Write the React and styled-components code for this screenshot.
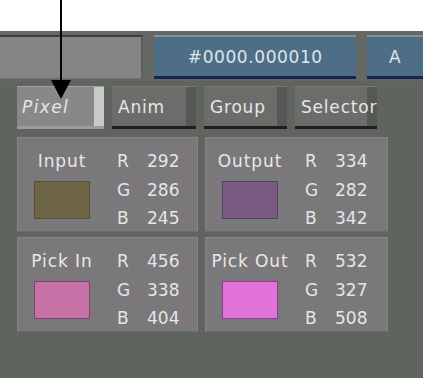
import styled, { createGlobalStyle } from 'styled-components'

const GlobalStyle = createGlobalStyle`
  html, body {
    margin: 0;
    padding: 0;
    background: #ffffff;
  }
  body {
    font-family: "DejaVu Sans", "Liberation Sans", sans-serif;
  }
`

const Page = styled.div`
  position: relative;
  width: 423px;
  height: 378px;
  overflow: hidden;
  background: #ffffff;
`

const WhiteHead = styled.div`
  height: 31px;
`

const TopBar = styled.div`
  display: flex;
  align-items: flex-start;
  gap: 11px;
  height: 50px;
  padding-top: 4px;
  box-sizing: border-box;
  background: #656762;
`

const Field = styled.div`
  width: 144px;
  height: 44px;
  box-sizing: border-box;
  background: #858585;
  border-top: 2px solid #3d3e3c;
  border-right: 2px solid #5d5e5b;
  border-bottom: 1px solid #707170;
`

const BlueButton = styled.div`
  width: ${({ w }) => w}px;
  height: 44px;
  box-sizing: border-box;
  display: flex;
  align-items: center;
  justify-content: center;
  background: #4d6e86;
  border-top: 2px solid #7d93a4;
  border-bottom: 3px solid #1a2357;
  color: #dfe5ea;
  font-size: 17px;
  letter-spacing: 0.6px;
`

const Main = styled.div`
  background: #60645f;
  height: 297px;
  padding: 5px 0 0 17px;
  box-sizing: border-box;
`

const TabRow = styled.div`
  display: flex;
  gap: 8px;
  margin-bottom: 8px;
`

const Tab = styled.div`
  width: ${({ w }) => w}px;
  height: 43px;
  box-sizing: border-box;
  display: flex;
  align-items: center;
  padding-left: ${({ active }) => (active ? 5 : 6)}px;
  background: ${({ active }) => (active ? '#888888' : '#6c6d6a')};
  border-top: 1px solid ${({ active }) => (active ? '#a0a0a0' : '#7a7b78')};
  border-bottom: 3px solid ${({ active }) => (active ? '#9c9c9c' : '#1f201e')};
  box-shadow: inset -10px 0 0 ${({ active }) => (active ? '#c9c9c9' : '#565855')};
  color: #e6e6e6;
  font-size: 17px;
  letter-spacing: ${({ active }) => (active ? 1.4 : 0.8)}px;
  white-space: nowrap;
  font-style: ${({ active }) => (active ? 'italic' : 'normal')};
`

const Grid = styled.div`
  display: grid;
  grid-template-columns: 181px 183px;
  grid-auto-rows: 95px;
  column-gap: 7px;
  row-gap: 5px;
`

const Panel = styled.div`
  display: flex;
  padding: 9px 0 0 7px;
  box-sizing: border-box;
  background: #7a787a;
  border: 1px solid #868486;
  border-bottom-color: #6c6b6c;
`

const SwatchCol = styled.div`
  width: 74px;
  display: flex;
  flex-direction: column;
  align-items: center;
`

const Label = styled.div`
  height: 28px;
  line-height: 28px;
  color: #e8e8e8;
  font-size: 17px;
  letter-spacing: 0.9px;
  white-space: nowrap;
`

const Swatch = styled.div`
  width: 56px;
  height: 38px;
  margin-top: 6px;
  box-sizing: border-box;
  background: ${({ color }) => color};
  border: 1px solid ${({ edge }) => edge};
`

const Values = styled.div`
  display: grid;
  grid-template-columns: 30px auto;
  grid-auto-rows: 28.5px;
  margin-left: ${({ offset }) => offset}px;
  color: #e6e6e6;
  font-size: 17px;
  line-height: 28px;
`

const Arrow = styled.svg`
  position: absolute;
  left: 0;
  top: 0;
`

const panels = [
  { name: 'Input', color: '#6d6446', edge: '#575039', rgb: ['292', '286', '245'], offset: 18 },
  { name: 'Output', color: '#795a83', edge: '#5a4262', rgb: ['334', '282', '342'], offset: 18 },
  { name: 'Pick In', color: '#c672a6', edge: '#7c4466', rgb: ['456', '338', '404'], offset: 18 },
  { name: 'Pick Out', color: '#e172da', edge: '#8c3c84', rgb: ['532', '327', '508'], offset: 18 },
]

const ColorPanel = ({ item }) => (
  <Panel>
    <SwatchCol>
      <Label>{item.name}</Label>
      <Swatch color={item.color} edge={item.edge} />
    </SwatchCol>
    <Values offset={item.offset}>
      <span>R</span><span>{item.rgb[0]}</span>
      <span>G</span><span>{item.rgb[1]}</span>
      <span>B</span><span>{item.rgb[2]}</span>
    </Values>
  </Panel>
)

export default function App() {
  return <>
    <GlobalStyle />
    <Page>
      <WhiteHead />
      <TopBar>
        <Field />
        <BlueButton w={203}>#0000.000010</BlueButton>
        <BlueButton w={56}>A</BlueButton>
      </TopBar>
      <Main>
        <TabRow>
          <Tab w={87} active>Pixel</Tab>
          <Tab w={84}>Anim</Tab>
          <Tab w={83}>Group</Tab>
          <Tab w={82}>Selector</Tab>
        </TabRow>
        <Grid>
          {panels.map(p => <ColorPanel key={p.name} item={p} />)}
        </Grid>
      </Main>
      <Arrow width="423" height="110" viewBox="0 0 423 110">
        <rect x="60" y="0" width="2" height="82" fill="#000" />
        <polygon points="51,80 71,80 61,99" fill="#000" />
      </Arrow>
    </Page>
  </>
}
